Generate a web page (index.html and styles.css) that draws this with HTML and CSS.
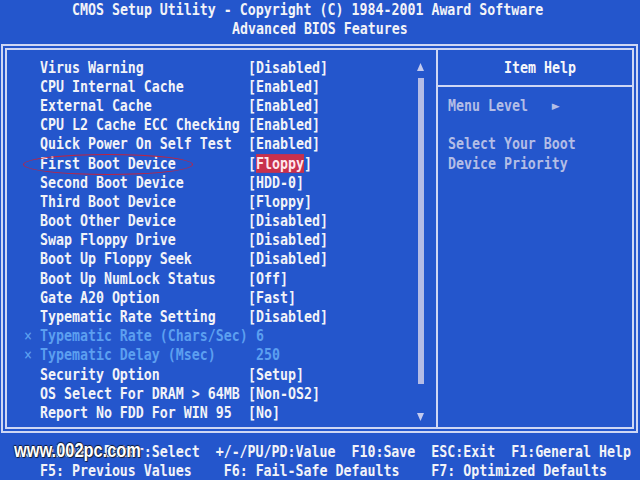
FILE: index.html
```html
<!DOCTYPE html>
<html lang="en">
<head>
  <meta charset="UTF-8">
  <meta name="viewport" content="width=device-width, initial-scale=1.0">
  <title>CMOS Setup Utility</title>
  <link rel="stylesheet" href="styles.css">
</head>
<body>
  <div class="screen">
    <div class="title">
      <div class="line t1">CMOS Setup Utility - Copyright (C) 1984-2001 Award Software</div>
      <div class="line t2">Advanced BIOS Features</div>
    </div>

    <div class="frame">
      <div class="menu">
        <ul class="items">
          <li class="item"><span class="mark"></span><span class="label">Virus Warning</span><span class="value">[Disabled]</span></li>
          <li class="item"><span class="mark"></span><span class="label">CPU Internal Cache</span><span class="value">[Enabled]</span></li>
          <li class="item"><span class="mark"></span><span class="label">External Cache</span><span class="value">[Enabled]</span></li>
          <li class="item"><span class="mark"></span><span class="label">CPU L2 Cache ECC Checking</span><span class="value">[Enabled]</span></li>
          <li class="item"><span class="mark"></span><span class="label">Quick Power On Self Test</span><span class="value">[Enabled]</span></li>
          <li class="item"><span class="mark"></span><span class="label">First Boot Device</span><span class="value">[<span class="sel">Floppy</span>]</span></li>
          <li class="item"><span class="mark"></span><span class="label">Second Boot Device</span><span class="value">[HDD-0]</span></li>
          <li class="item"><span class="mark"></span><span class="label">Third Boot Device</span><span class="value">[Floppy]</span></li>
          <li class="item"><span class="mark"></span><span class="label">Boot Other Device</span><span class="value">[Disabled]</span></li>
          <li class="item"><span class="mark"></span><span class="label">Swap Floppy Drive</span><span class="value">[Disabled]</span></li>
          <li class="item"><span class="mark"></span><span class="label">Boot Up Floppy Seek</span><span class="value">[Disabled]</span></li>
          <li class="item"><span class="mark"></span><span class="label">Boot Up NumLock Status</span><span class="value">[Off]</span></li>
          <li class="item"><span class="mark"></span><span class="label">Gate A20 Option</span><span class="value">[Fast]</span></li>
          <li class="item"><span class="mark"></span><span class="label">Typematic Rate Setting</span><span class="value">[Disabled]</span></li>
          <li class="item off"><span class="mark">×</span><span class="label">Typematic Rate (Chars/Sec)</span><span class="value"> 6</span></li>
          <li class="item off"><span class="mark">×</span><span class="label">Typematic Delay (Msec)</span><span class="value"> 250</span></li>
          <li class="item"><span class="mark"></span><span class="label">Security Option</span><span class="value">[Setup]</span></li>
          <li class="item"><span class="mark"></span><span class="label">OS Select For DRAM &gt; 64MB</span><span class="value">[Non-OS2]</span></li>
          <li class="item"><span class="mark"></span><span class="label">Report No FDD For WIN 95</span><span class="value">[No]</span></li>
        </ul>
        <div class="scroll">
          <div class="arrow"><svg width="7" height="8" viewBox="0 0 7 8"><polygon points="3.5,0 7,8 0,8"/></svg></div>
          <div class="track"></div>
          <div class="spacer"></div>
          <div class="arrow"><svg width="7" height="8" viewBox="0 0 7 8"><polygon points="0,0 7,0 3.5,8"/></svg></div>
        </div>
      </div>

      <div class="help">
        <div class="line help-head">Item Help</div>
        <div class="help-rule"></div>
        <div class="line dim">Menu Level   ►</div>
        <div class="line"></div>
        <div class="line dim">Select Your Boot</div>
        <div class="line dim">Device Priority</div>
      </div>
    </div>

    <div class="keys">
      <div class="line k1">↑↓→←:Move  Enter:Select  +/-/PU/PD:Value  F10:Save  ESC:Exit  F1:General Help</div>
      <div class="line k2">F5: Previous Values    F6: Fail-Safe Defaults    F7: Optimized Defaults</div>
    </div>

    <div class="circle"></div>
    <div class="watermark">www.002pc.com</div>
  </div>
</body>
</html>
```

FILE: styles.css
```css
body { margin: 0; background: #2456cc; }

.screen { position: relative; width: 640px; height: 480px; overflow: hidden; background: #2456cc; color: #f2f3f8; font-family: "DejaVu Sans Mono", "Liberation Mono", monospace; font-size: 13.288px; font-weight: bold; }

/* one text-mode row: 8px cells, 19.2px tall, glyphs stretched like the bios font */
.line { height: 19.2px; line-height: 19.2px; white-space: pre; transform: scaleY(1.25); }

.t1 { padding-left: 72px; }
.t2 { padding-left: 232px; }

.frame { display: flex; height: 377px; margin: 5.6px 2px 0 1px; border: 6px double #cfd7f4; }

.menu { display: flex; width: 429px; padding-top: 7.6px; box-sizing: border-box; }
.items { list-style: none; margin: 0; padding: 0 0 0 17px; width: 392px; flex: none; }
.item { display: flex; height: 19.2px; line-height: 19.2px; white-space: pre; transform: scaleY(1.25); }
.mark { width: 16px; flex: none; font-weight: normal; }
.label { width: 208px; flex: none; }
.off { color: #5c9ff0; }
.sel { background: #c8304c; color: #ffe6ec; }

.scroll { display: flex; flex-direction: column; width: 8px; }
.arrow { height: 19.2px; display: flex; align-items: center; justify-content: center; }
.arrow svg { fill: #c3caee; }
.track { height: 306px; margin: 1px 0 0 2px; width: 6px; background: #b4bce6; }
.spacer { flex: 1; }

.help { flex: 1; border-left: 2px solid #cfd7f4; padding-top: 7.6px; }
.help-head { padding-left: 66px; color: #f6f6fa; }
.help-rule { height: 2px; margin: 8.6px 0; background: #cfd7f4; }
.dim { padding-left: 10px; color: #b3bde6; }

.keys { margin-top: 8.6px; }
.k1 { padding-left: 16px; }
.k2 { padding-left: 40px; }

.circle { position: absolute; left: 23px; top: 154px; width: 168px; height: 19px; border: 1px solid #c02440; border-radius: 50%; }

.watermark { position: absolute; left: 14px; top: 439px; font-family: "Liberation Sans", Arial, sans-serif; font-size: 21px; font-weight: bold; line-height: 1; color: #ffffff; transform: scaleX(0.78); transform-origin: left center; text-shadow: 1px 1px 1px #101830, -1px 0 1px #101830, 0 -1px 1px #101830; }
```
